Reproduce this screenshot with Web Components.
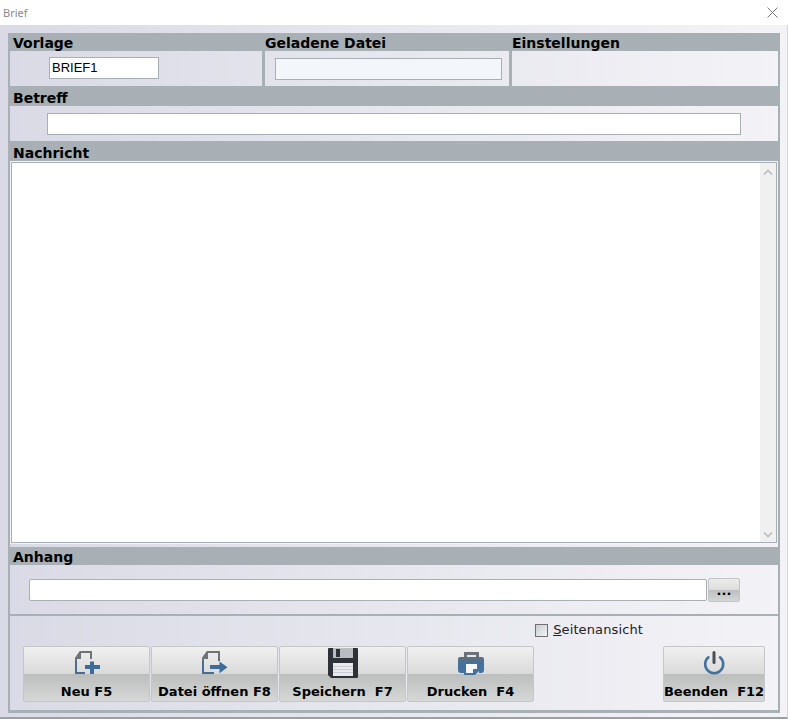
<!DOCTYPE html>
<html>
<head>
<meta charset="utf-8">
<title>Brief</title>
<style>
  html, body { margin: 0; height: 100%; background: #fff; overflow: hidden; }
  body { font-family: "DejaVu Sans", sans-serif; }
</style>
</head>
<body>
<brief-window>
  <brief-section title-text="Vorlage" slot="top" style="--w:252px;--head-h:18px"><text-box value="BRIEF1" style="--box-w:110px;--box-h:22px;margin:6px 0 0 39px"></text-box></brief-section>
  <brief-section title-text="Geladene Datei" slot="top" divider style="--w:247px;--head-h:18px"><text-box readonly style="--box-w:227px;--box-h:22px;margin:7px 0 0 10px"></text-box></brief-section>
  <brief-section title-text="Einstellungen" slot="top" divider style="--w:269px;--head-h:18px"></brief-section>
  <brief-section title-text="Betreff" style="--body-h:35px;--head-pad:2px"><text-box style="--box-w:694px;--box-h:22px;margin:7px 0 0 37px"></text-box></brief-section>
  <brief-section title-text="Nachricht" style="--body-h:386px;--head-pad:2px"><message-area></message-area></brief-section>
  <brief-section title-text="Anhang" style="--body-h:49px;--head-h:18px"><attach-row></attach-row></brief-section>
  <tool-bar>
    <tool-button label="Neu F5" icon="new"></tool-button>
    <tool-button label="Datei öffnen F8" icon="open"></tool-button>
    <tool-button label="Speichern&nbsp; F7" icon="save"></tool-button>
    <tool-button label="Drucken&nbsp; F4" icon="print"></tool-button>
    <tool-button slot="end" label="Beenden&nbsp; F12" icon="power"></tool-button>
  </tool-bar>
</brief-window>
<script>
class BriefWindow extends HTMLElement {
  constructor() {
    super();
    this.attachShadow({ mode: "open" });
    this.shadowRoot.innerHTML = `
      <style>
        :host { display: flex; flex-direction: column; width: 788px; height: 719px; box-sizing: border-box; }
        .title { height: 25px; flex: none; display: flex; justify-content: space-between; align-items: center;
          padding: 0 10px 0 3px; font: 11px "Noto Sans", sans-serif; color: #8a8a8a; background: #fff; }
        .title svg { display: block; }
        .client { flex: 1; background: linear-gradient(90deg, #dadae6, #f3f3f7); padding: 8px 7px 0 8px; box-sizing: border-box;
          border-bottom: 2px solid #9aa0a5; border-right: 1px solid #d6d6da; }
        .frame { height: 680px; width: 772px; box-sizing: border-box; border: solid #a8b0b6; border-width: 0 2px 3px 2px; }
        .top { display: flex; }
      </style>
      <div class="title"><span>Brief</span>
        <svg width="11" height="11" viewBox="0 0 11 11"><path d="M.5.5l10 10M10.5.5l-10 10" stroke="#7c7c7c" fill="none"/></svg>
      </div>
      <div class="client"><div class="frame">
        <div class="top"><slot name="top"></slot></div>
        <slot></slot>
      </div></div>`;
  }
}

class BriefSection extends HTMLElement {
  constructor() {
    super();
    this.attachShadow({ mode: "open" });
    this.shadowRoot.innerHTML = `
      <style>
        :host { display: block; width: var(--w, auto); flex: none; box-sizing: border-box; }
        :host([divider]) { border-left: 3px solid #a8b0b6; }
        .head { height: var(--head-h, 20px); background: #a8b0b6; margin: 0 -2px; padding: var(--head-pad, 0) 0 0 5px; box-sizing: border-box;
          font: bold 14px/20px "DejaVu Sans", sans-serif; color: #000; white-space: nowrap; overflow: visible; }
        :host([divider]) .head { margin-left: -3px; padding-left: 3px; }
        .body { height: var(--body-h, 35px); overflow: hidden; }
      </style>
      <div class="head"></div>
      <div class="body"><slot></slot></div>`;
  }
  connectedCallback() {
    this.shadowRoot.querySelector(".head").textContent = this.getAttribute("title-text");
  }
}

class TextBox extends HTMLElement {
  constructor() {
    super();
    this.attachShadow({ mode: "open" });
    this.shadowRoot.innerHTML = `
      <style>
        :host { display: block; width: var(--box-w); height: var(--box-h); box-sizing: border-box; border: 1px solid #a8b0b6; background: #fff;
          font: 13px/20px "Liberation Sans", sans-serif; color: #000; padding-left: 2px; }
        :host([readonly]) { background: #f3f6fb; }
      </style><span></span>`;
  }
  connectedCallback() {
    this.shadowRoot.querySelector("span").textContent = this.getAttribute("value") || "";
  }
}

class MessageArea extends HTMLElement {
  constructor() {
    super();
    this.attachShadow({ mode: "open" });
    this.shadowRoot.innerHTML = `
      <style>
        :host { display: block; height: 381px; margin: 1px 1px 0; box-sizing: border-box; border: 1px solid #a8b0b6; background: #fff; outline: 1px solid #f2f3f6; position: relative; }
        .bar { position: absolute; right: 0; top: 0; bottom: 0; width: 16px; background: #f0f0f0; display: flex; flex-direction: column; justify-content: space-between; align-items: center; padding: 6px 0 4px; box-sizing: border-box; }
        svg { display: block; }
      </style>
      <div class="bar">
        <svg width="10" height="7" viewBox="0 0 10 7"><path d="M1 5.5l4-4 4 4" stroke="#bcbcbc" stroke-width="1.6" fill="none"/></svg>
        <svg width="10" height="7" viewBox="0 0 10 7"><path d="M1 1.5l4 4 4-4" stroke="#bcbcbc" stroke-width="1.6" fill="none"/></svg>
      </div>`;
  }
}

class AttachRow extends HTMLElement {
  constructor() {
    super();
    this.attachShadow({ mode: "open" });
    this.shadowRoot.innerHTML = `
      <style>
        :host { display: flex; align-items: center; gap: 1px; padding: 13px 0 0 19px; }
        .field { width: 678px; height: 22px; box-sizing: border-box; border: 1px solid #a8b0b6; background: #fff; border-radius: 2px; }
        .more { width: 32px; height: 24px; box-sizing: border-box; border: 1px solid #c2c5c8; border-radius: 2px;
          background: linear-gradient(#ededed 0, #dcdcdc 50%, #bdbfbf 50%, #d4d5d5 100%);
          font: bold 13px/24px "DejaVu Sans", sans-serif; text-align: center; color: #000; }
      </style>
      <div class="field"></div><div class="more">...</div>`;
  }
}

class ToolBar extends HTMLElement {
  constructor() {
    super();
    this.attachShadow({ mode: "open" });
    this.shadowRoot.innerHTML = `
      <style>
        :host { display: block; border-top: 2px solid #a8b0b6; height: 96px; box-sizing: border-box; }
        .check { display: flex; justify-content: flex-end; align-items: center; gap: 5px; padding: 6px 135px 0 0;
          font: 13px/16px "DejaVu Sans", sans-serif; letter-spacing: .12px; color: #222; }
        .box { width: 13px; height: 13px; box-sizing: border-box; border: 1px solid #6f6f6f; background: linear-gradient(135deg, #c9ccd2, #f1f2f4); }
        .row { display: flex; justify-content: space-between; padding: 8px 13px 0 13px; }
        .left { display: flex; gap: 1px; }
      </style>
      <div class="check"><span class="box"></span><span><u>S</u>eitenansicht</span></div>
      <div class="row"><div class="left"><slot></slot></div><slot name="end"></slot></div>`;
  }
}

const ICONS = {
  new: `<path d="M8 3h12v8h-2V5h-9v6H5v13h8v2H3V10z" fill="#4a6d93"/><path d="M8 3h12v8h-2V5h-9v6H5v2H3v-3z" fill="#6f7478"/><path d="M18 13.5h4V17h6v4h-6v5h-4v-5h-5v-4h5z" fill="#3f6b99"/>`,
  open: `<path d="M7 3h13v10h-2V5H8v6H4v13h10v2H2V10z" fill="#4a6d93"/><path d="M7 3h13v8h-2V5H8v6H4v2H2v-3z" fill="#6f7478"/><path d="M10 17h9.5v-3.5l8 5.8-8 6V21H10z" fill="#3f6b99"/>`,
  save: `<path d="M1 0h28a1 1 0 0 1 1 1v28a1 1 0 0 1-1 1H3l-3-3V1a1 1 0 0 1 1-1z" fill="#2e3137"/><rect x="5" y="0" width="20" height="10" fill="#b9bcc0"/><rect x="8" y="1" width="4" height="8" fill="#2e3137"/><rect x="5" y="15" width="20" height="13" fill="#e8e9ee"/><path d="M5 18.5h20M5 21.5h20M5 24.5h20" stroke="#c9ccd2"/>`,
  print: `<path d="M8 4h15v6h-3V7h-9v3H8z" fill="#6b7278"/><path d="M5 9h20a3 3 0 0 1 3 3v10a3 3 0 0 1-3 3h-2v-5H8v5H5a3 3 0 0 1-3-3V12a3 3 0 0 1 3-3z" fill="#44719e"/><path d="M2 12a3 3 0 0 1 3-3h20a3 3 0 0 1 3 3v1H2z" fill="#5b6f84"/><path d="M8 14h15v9l-4 4H8z" fill="#44719e"/><path d="M10 16h11v5h-4v4h-7z" fill="#f4f6f9"/>`,
  power: `<path d="M9.4 9.3A9 9 0 1 0 21 9.3" stroke="#44719e" stroke-width="2.6" fill="none" stroke-linecap="round"/><path d="M15 4.5v10" stroke="#4b5056" stroke-width="3" stroke-linecap="round"/>`
};

class ToolButton extends HTMLElement {
  constructor() {
    super();
    this.attachShadow({ mode: "open" });
    this.shadowRoot.innerHTML = `
      <style>
        :host { display: flex; flex-direction: column; align-items: center; width: 127px; height: 56px; box-sizing: border-box; border: 1px solid #c4c6c8; border-radius: 2px;
          background: linear-gradient(#f0f0f0 0, #dadada 50%, #bcbebe 50%, #d6d7d7 100%); overflow: hidden; }
        :host([icon="power"]) { width: 102px; }
        svg { display: block; flex: none; margin-top: 1px; }
        .label { font: bold 13px/16px "DejaVu Sans", sans-serif; color: #000; white-space: nowrap; margin-top: 6px; }
      </style>
      <svg width="30" height="30" viewBox="0 0 30 30"></svg>
      <div class="label"></div>`;
  }
  connectedCallback() {
    this.shadowRoot.querySelector("svg").innerHTML = ICONS[this.getAttribute("icon")];
    this.shadowRoot.querySelector(".label").textContent = this.getAttribute("label");
  }
}

customElements.define("brief-window", BriefWindow);
customElements.define("brief-section", BriefSection);
customElements.define("text-box", TextBox);
customElements.define("message-area", MessageArea);
customElements.define("attach-row", AttachRow);
customElements.define("tool-bar", ToolBar);
customElements.define("tool-button", ToolButton);
</script>
</body>
</html>
